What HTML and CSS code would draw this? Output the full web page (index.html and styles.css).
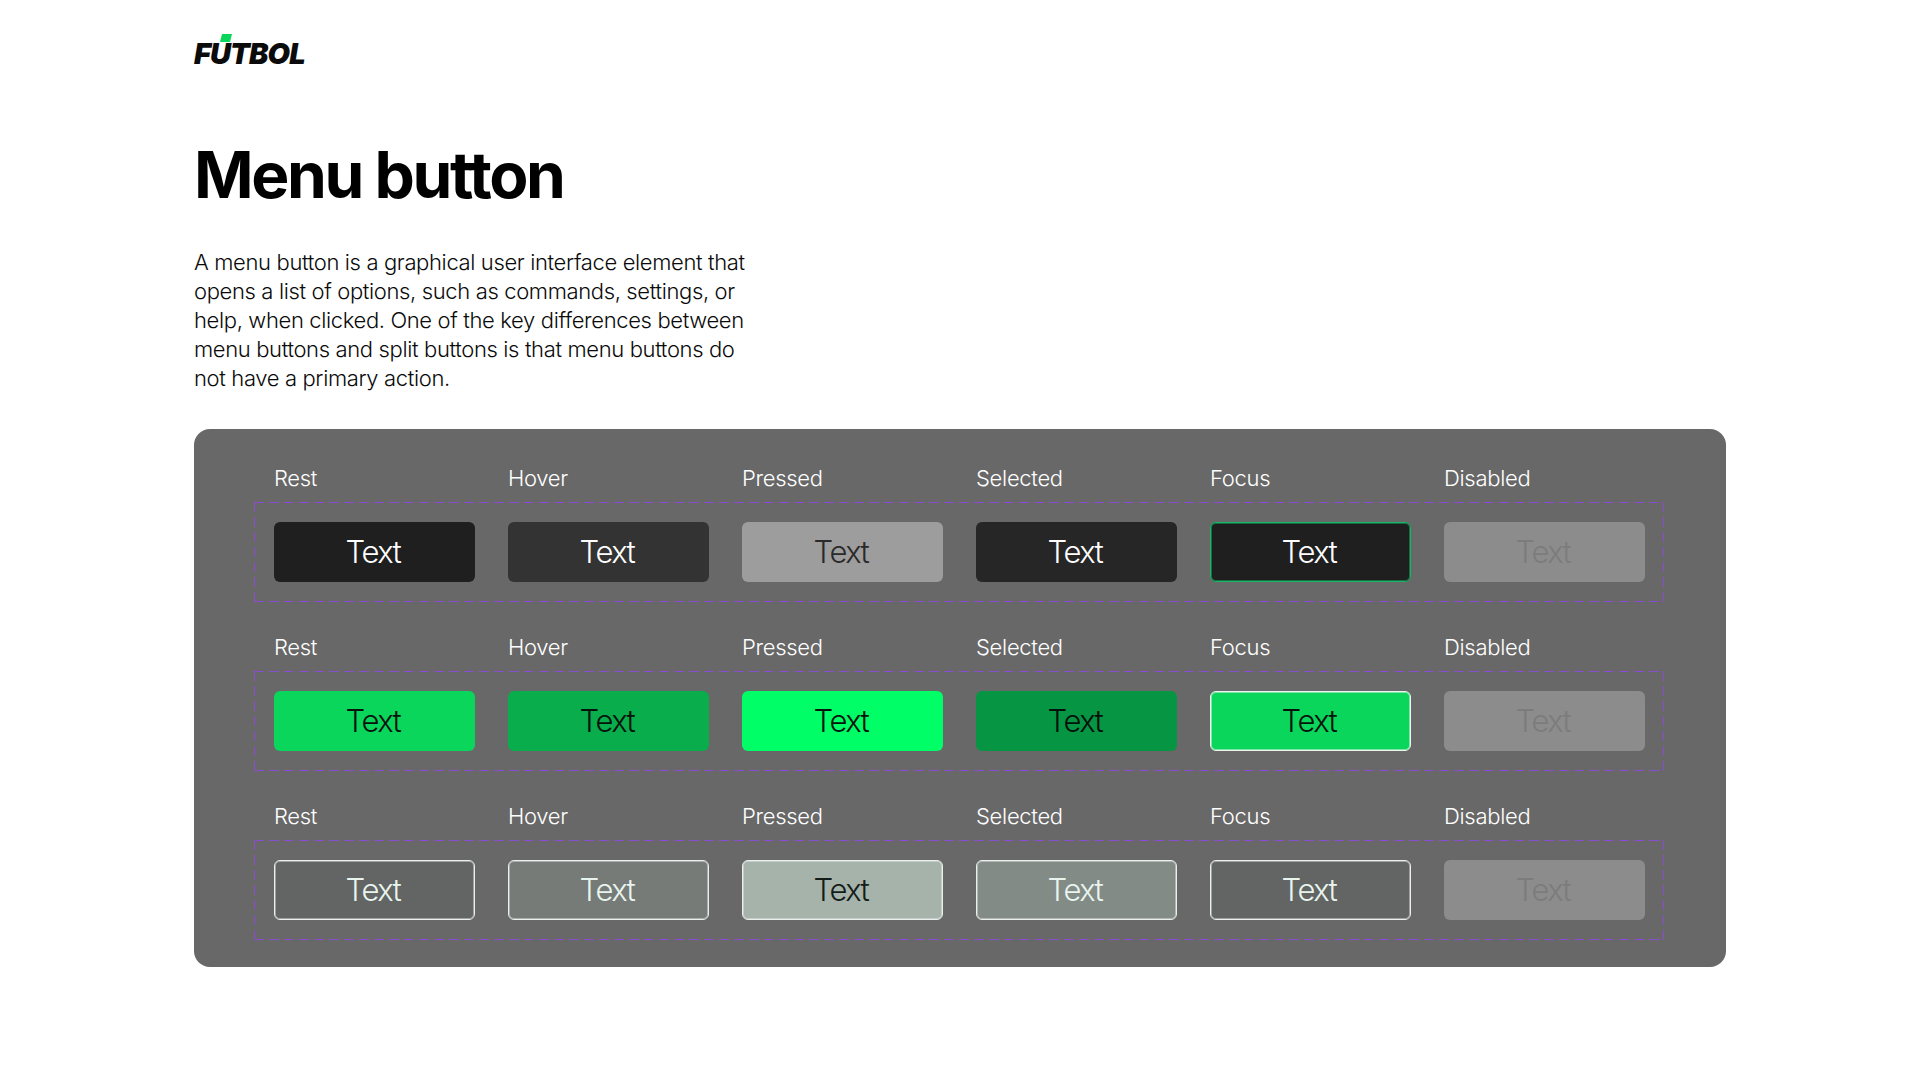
FILE: index.html
```html
<!DOCTYPE html>
<html lang="en">
<head>
<meta charset="utf-8">
<title>Menu button</title>
<link rel="stylesheet" href="styles.css">
</head>
<body>
<main class="page">
  <div class="logo"><span class="logo-word">FÚTBOL</span><span class="logo-accent"></span></div>
  <h1 class="title">Menu button</h1>
  <p class="intro">A menu button is a graphical user interface element that opens a list of options, such as commands, settings, or help, when clicked. One of the key differences between menu buttons and split buttons is that menu buttons do not have a primary action.</p>
  <section class="panel">
    <div class="group">
      <div class="labels"><span>Rest</span><span>Hover</span><span>Pressed</span><span>Selected</span><span>Focus</span><span>Disabled</span></div>
      <div class="variants">
        <button class="btn dark-rest">Text</button>
        <button class="btn dark-hover">Text</button>
        <button class="btn dark-pressed">Text</button>
        <button class="btn dark-selected">Text</button>
        <button class="btn dark-focus">Text</button>
        <button class="btn disabled">Text</button>
      </div>
    </div>
    <div class="group">
      <div class="labels"><span>Rest</span><span>Hover</span><span>Pressed</span><span>Selected</span><span>Focus</span><span>Disabled</span></div>
      <div class="variants">
        <button class="btn green-rest">Text</button>
        <button class="btn green-hover">Text</button>
        <button class="btn green-pressed">Text</button>
        <button class="btn green-selected">Text</button>
        <button class="btn green-focus">Text</button>
        <button class="btn disabled">Text</button>
      </div>
    </div>
    <div class="group">
      <div class="labels"><span>Rest</span><span>Hover</span><span>Pressed</span><span>Selected</span><span>Focus</span><span>Disabled</span></div>
      <div class="variants">
        <button class="btn line-rest">Text</button>
        <button class="btn line-hover">Text</button>
        <button class="btn line-pressed">Text</button>
        <button class="btn line-selected">Text</button>
        <button class="btn line-rest">Text</button>
        <button class="btn disabled">Text</button>
      </div>
    </div>
  </section>
</main>
</body>
</html>
```
FILE: styles.css
```css
* { box-sizing: border-box; }
html, body { margin: 0; padding: 0; background: #fff; }
body { font-family: Inter, "Liberation Sans", sans-serif; color: #0a0a0a; }

.page { width: 1920px; height: 1080px; padding: 30px 194px 0; overflow: hidden; }

.logo { position: relative; width: 112px; height: 40px; }
.logo-word {
  display: block; padding-top: 5px;
  font-size: 29px; line-height: 38px; font-weight: 900; font-style: italic;
  letter-spacing: -0.9px; color: #0b0b0b;
}
.logo-accent {
  position: absolute; left: 27px; top: 4px; width: 10px; height: 8px;
  background: #0ad65c; transform: skewX(-14deg);
}

.title { margin: 66px 0 0; font-size: 64px; line-height: 78px; font-weight: 700; letter-spacing: -2.4px; color: #000; }

.intro { margin: 34px 0 0; width: 560px; font-size: 22px; line-height: 29px; font-weight: 350; letter-spacing: -0.36px; color: #0a0a0a; }

.panel {
  margin-top: 36px; width: 1532px; height: 538px; padding: 34px 0 0 60px;
  background: #686868; border-radius: 16px;
  display: flex; flex-direction: column; gap: 30px;
}

.labels {
  display: grid; grid-template-columns: repeat(6, 201px); column-gap: 33px;
  padding: 0 20px; margin-bottom: 9px;
  font-size: 22px; line-height: 30px; font-weight: 350; letter-spacing: -0.3px; color: #fff;
}

.variants {
  display: grid; grid-template-columns: repeat(6, 201px); column-gap: 33px;
  width: 1410px; height: 100px; padding: 20px;
  --dash: #8a4dd2;
  background-image:
    repeating-linear-gradient(90deg, var(--dash) 0 10px, transparent 10px 15px),
    repeating-linear-gradient(90deg, var(--dash) 0 10px, transparent 10px 15px),
    repeating-linear-gradient(0deg, var(--dash) 0 10px, transparent 10px 15px),
    repeating-linear-gradient(0deg, var(--dash) 0 10px, transparent 10px 15px);
  background-size: 100% 1px, 100% 1px, 1px 100%, 1px 100%;
  background-position: 0 0, 0 100%, 0 0, 100% 0;
  background-repeat: no-repeat;
}

.btn {
  height: 60px; padding: 0 3px 0 0; border: 1px solid transparent; border-radius: 6px;
  font-family: inherit; font-size: 31px; line-height: 58px; font-weight: 350;
  letter-spacing: -1.5px; text-align: center;
}

.dark-rest { background: #1f1f1f; color: #fff; }
.dark-hover { background: #333; color: #fff; }
.dark-pressed { background: #9d9d9d; color: #2a2a2a; }
.dark-selected { background: #262626; color: #fff; }
.dark-focus { background: #1f1f1f; color: #fff; border-color: #14b866; box-shadow: inset 0 0 0 1px rgba(20, 184, 102, .5); }

.green-rest { background: #0ad65c; color: #06130c; }
.green-hover { background: #09ad4b; color: #06130c; }
.green-pressed { background: #00ff66; color: #06130c; }
.green-selected { background: #069643; color: #05100a; }
.green-focus { background: #0ad65c; color: #06130c; border-color: #eef5f1; box-shadow: inset 0 0 0 1px rgba(238, 245, 241, .5); }

.line-rest, .line-hover, .line-pressed, .line-selected { border-color: #eaeeec; box-shadow: inset 0 0 0 1px rgba(234, 238, 236, .45); }
.line-rest { background: #636564; color: #e8f5ee; }
.line-hover { background: #767b78; color: #e8f5ee; }
.line-pressed { background: #a5b3ab; color: #141c18; }
.line-selected { background: #828b86; color: #e8f5ee; }

.disabled { background: #8c8c8c; color: #7c7c7c; }
```
